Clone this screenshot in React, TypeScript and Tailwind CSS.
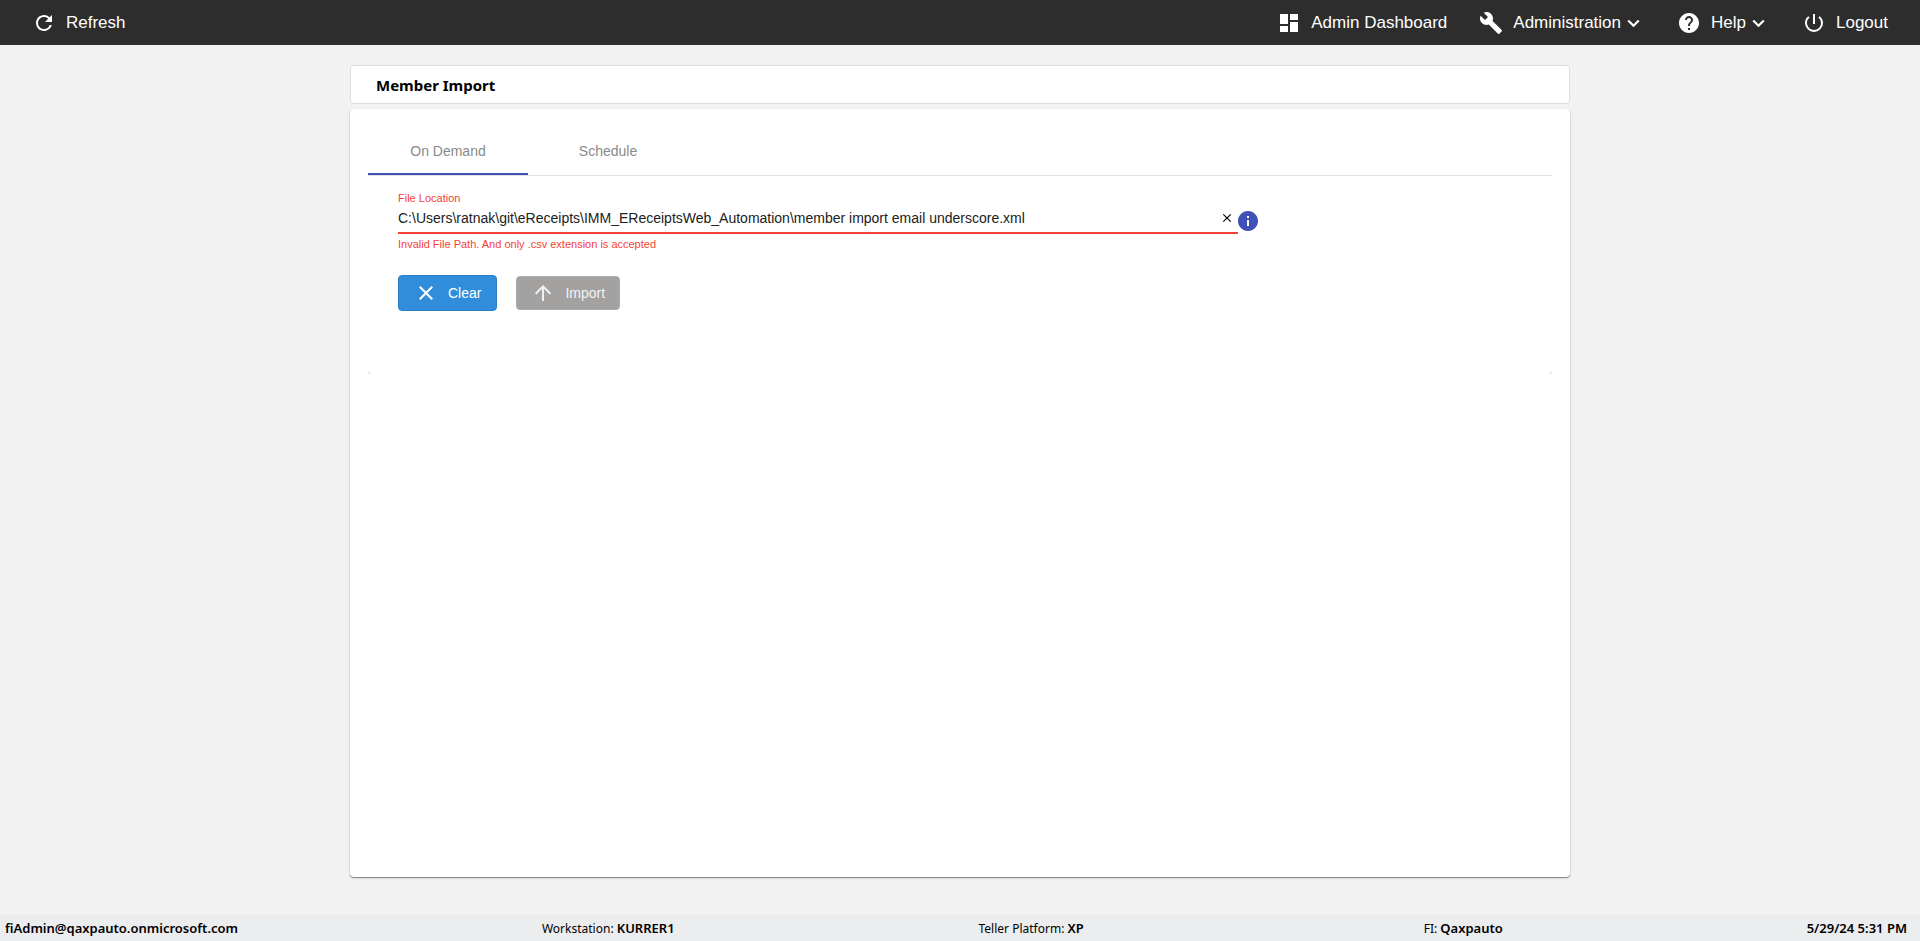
import { useState } from "react";
import type { ReactNode } from "react";
import {
    MdArrowUpward,
    MdBuild,
    MdClose,
    MdDashboard,
    MdHelp,
    MdInfo,
    MdPowerSettingsNew,
    MdRefresh,
} from "react-icons/md";

type NavButtonProps = {
    icon: ReactNode;
    label: string;
    menu?: boolean;
};

type StatusProps = {
    label?: string;
    value: string;
};

const TABS = ["On Demand", "Schedule"];

function Chevron() {
    return (
        <svg className="ml-1.5 mt-0.5" width="13" height="9" viewBox="0 0 13 9" fill="none">
            <path d="M1.2 1.5L6.5 6.8L11.8 1.5" stroke="currentColor" strokeWidth="2.2" />
        </svg>
    );
}

function NavButton({ icon, label, menu }: NavButtonProps) {
    return (
        <button type="button" className="flex items-center text-[17px] leading-6">
            {icon}
            <span className="ml-2.5">{label}</span>
            {menu && <Chevron />}
        </button>
    );
}

function Status({ label, value }: StatusProps) {
    return (
        <span>
            {label && <>{label}: </>}
            <strong className="text-[13px] font-semibold">{value}</strong>
        </span>
    );
}

export default function App() {
    const [tab, setTab] = useState("On Demand");
    const [path, setPath] = useState(
        "C:\\Users\\ratnak\\git\\eReceipts\\IMM_EReceiptsWeb_Automation\\member import email underscore.xml"
    );

    return (
        <div className="flex min-h-screen flex-col bg-[#f2f2f2] font-['Liberation_Sans',Arial,sans-serif] text-black">
            <header className="flex h-[45px] items-center justify-between bg-[#2d2d2d] px-8 text-white">
                <NavButton icon={<MdRefresh size={24} />} label="Refresh" />
                <nav className="flex items-center gap-8">
                    <NavButton icon={<MdDashboard size={24} />} label="Admin Dashboard" />
                    <NavButton icon={<MdBuild size={24} />} label="Administration" menu />
                    <div className="pl-[5px]">
                        <NavButton icon={<MdHelp size={24} />} label="Help" menu />
                    </div>
                    <div className="pl-[5px]">
                        <NavButton icon={<MdPowerSettingsNew size={24} />} label="Logout" />
                    </div>
                </nav>
            </header>

            <main className="mx-auto flex w-full max-w-[1220px] grow flex-col pt-5 pb-[38px]">
                <h1 className="rounded border border-[#dedede] bg-white px-[25px] pt-[9px] pb-2 font-['Noto_Sans',sans-serif] text-[15px] leading-5 font-bold">
                    Member Import
                </h1>

                <section className="mt-[5px] grow rounded bg-white p-[18px] shadow-[0_1px_1px_rgba(0,0,0,0.4),0_1px_3px_rgba(0,0,0,0.15)]">
                    <div role="tablist" className="flex border-b border-[#e0e0e0]">
                        {TABS.map((name) => (
                            <button
                                key={name}
                                type="button"
                                role="tab"
                                aria-selected={tab === name}
                                onClick={() => setTab(name)}
                                className={`h-12 w-40 border-b-2 pt-0.5 text-sm text-[#8a8a8a] ${
                                    tab === name ? "border-[#3f51b5]" : "border-transparent"
                                }`}
                            >
                                {name}
                            </button>
                        ))}
                    </div>

                    <div className="px-[30px] pt-4 pb-[60px]">
                        <div className="flex items-start">
                            <div className="w-full max-w-[840px]">
                                <label htmlFor="file-location" className="block text-[11px] leading-3 text-[#f44336]">
                                    File Location
                                </label>
                                <div className="flex h-[30px] items-center border-b-2 border-[#f44336]">
                                    <input
                                        id="file-location"
                                        type="text"
                                        value={path}
                                        onChange={(e) => setPath(e.target.value)}
                                        className="min-w-0 grow bg-transparent text-sm text-[#212121] outline-none"
                                    />
                                    <button
                                        type="button"
                                        aria-label="Clear file location"
                                        onClick={() => setPath("")}
                                        className="mr-1"
                                    >
                                        <MdClose size={14} />
                                    </button>
                                </div>
                                <p className="pt-1 text-[11px] leading-3 text-[#f44336]">
                                    Invalid File Path. And only .csv extension is accepted
                                </p>
                            </div>
                            <MdInfo size={24} className="-ml-0.5 mt-[17px] shrink-0 text-[#3f51b5]" />
                        </div>

                        <div className="mt-[25px] flex items-center gap-[19px] text-sm text-white">
                            <button
                                type="button"
                                onClick={() => setPath("")}
                                className="flex h-9 items-center rounded border border-[#2a7fc4] bg-[#308ddc] px-[15px]"
                            >
                                <MdClose size={24} />
                                <span className="ml-2.5">Clear</span>
                            </button>
                            <button
                                type="button"
                                disabled
                                className="flex h-[34px] items-center rounded border border-[#acabaa] bg-[#a3a2a1] px-3.5 text-[#f2f2f2]"
                            >
                                <MdArrowUpward size={24} />
                                <span className="ml-2.5">Import</span>
                            </button>
                        </div>
                    </div>

                    <div className="flex justify-between">
                        <span className="size-[3px] rounded-bl-sm border-b border-l border-[#e4e4e4]" />
                        <span className="size-[3px] rounded-br-sm border-r border-b border-[#e4e4e4]" />
                    </div>
                </section>
            </main>

            <footer className="flex h-[26px] items-center justify-between bg-[#ecedef] pt-0.5 pl-[5px] pr-[13px] font-['Noto_Sans',sans-serif] text-xs">
                <Status value="fiAdmin@qaxpauto.onmicrosoft.com" />
                <Status label="Workstation" value="KURRER1" />
                <Status label="Teller Platform" value="XP" />
                <div className="pl-9">
                    <Status label="FI" value="Qaxpauto" />
                </div>
                <Status value="5/29/24 5:31 PM" />
            </footer>
        </div>
    );
}
